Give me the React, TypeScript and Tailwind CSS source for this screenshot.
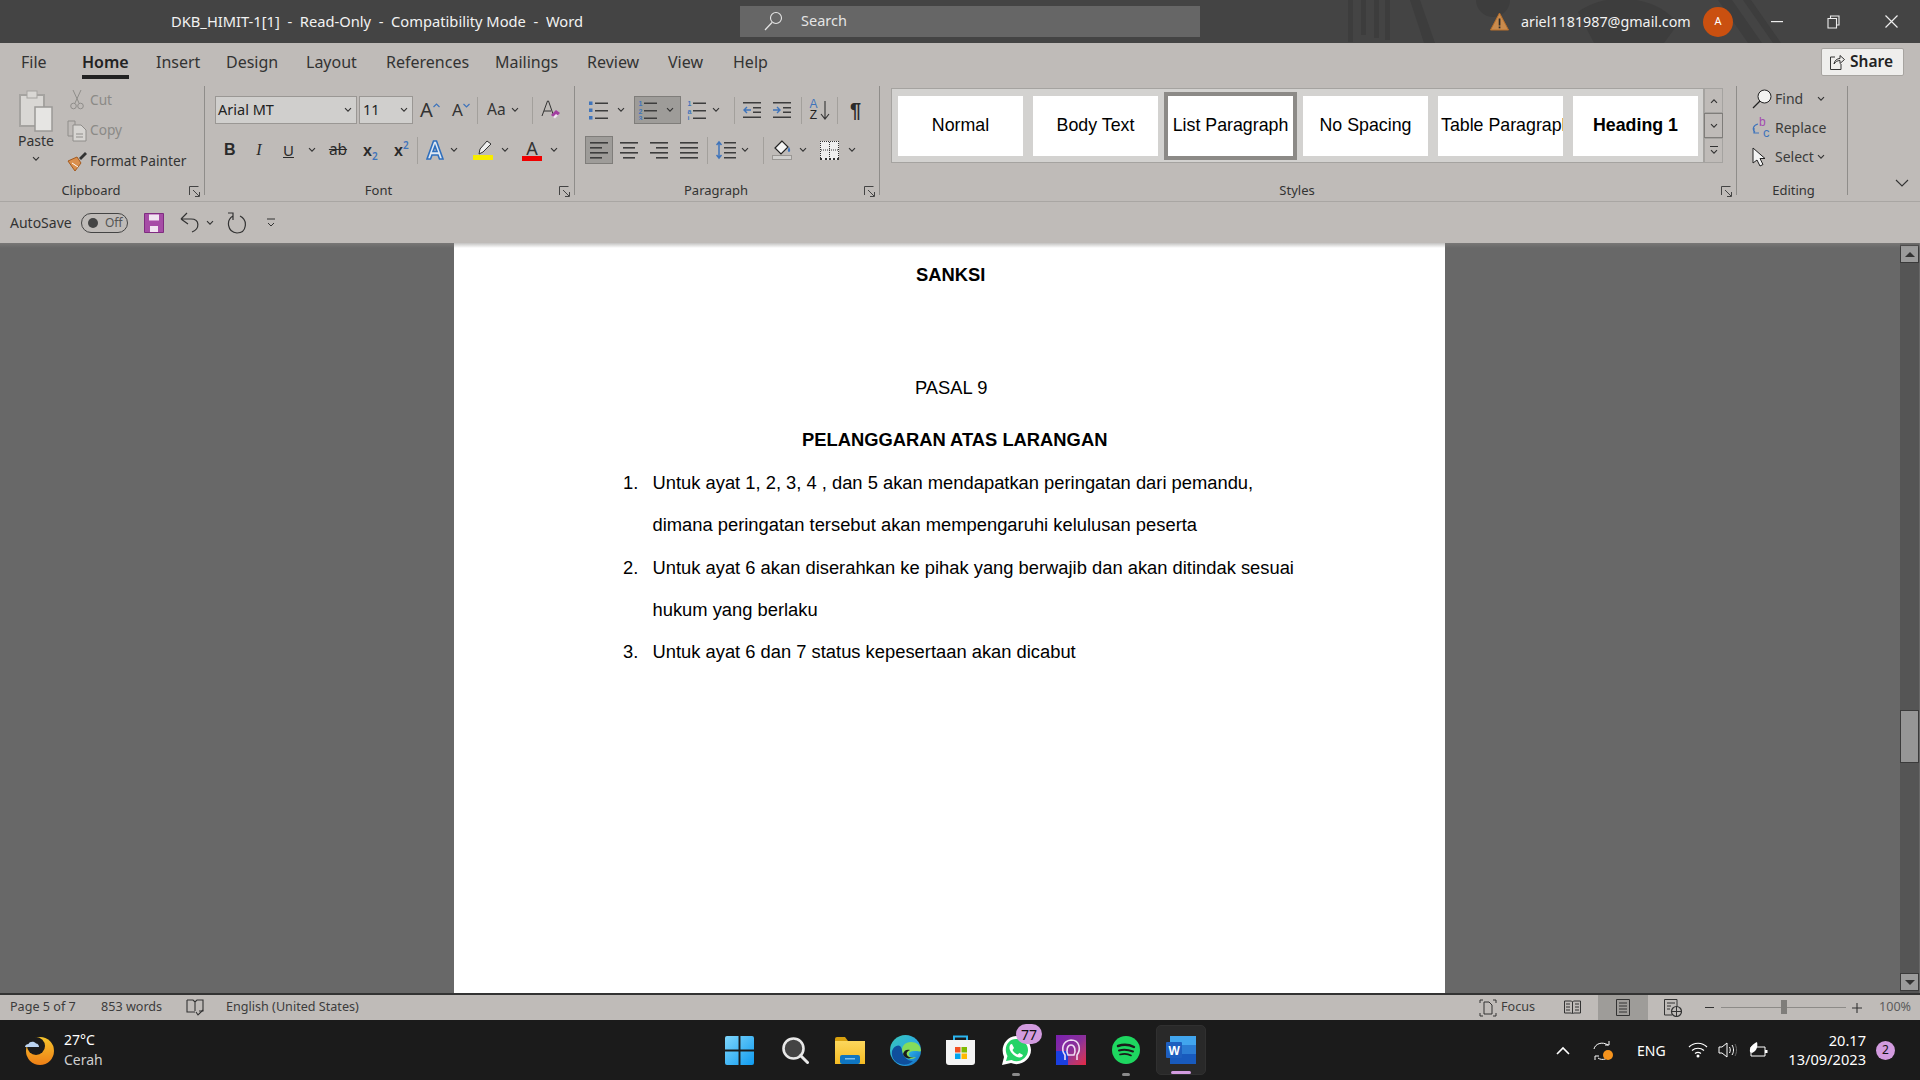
import type { ReactNode } from "react";

const UI = "font-['Noto_Sans','Open_Sans',sans-serif]";
const ARIAL = "font-['Liberation_Sans',Arial,sans-serif]";

const Chevron = ({ className = "" }: { className?: string }) => (
  <svg width="8" height="6" viewBox="0 0 8 6" className={`shrink-0 ${className}`}>
    <path d="M1 1.2 4 4.2 7 1.2" fill="none" stroke="#333" strokeWidth="1.1" />
  </svg>
);

const Launcher = () => (
  <svg width="11" height="11" viewBox="0 0 11 11" className="shrink-0">
    <path d="M.5 9V.5H9.5M4 4l6 6M6 10.5h4.500V6" fill="none" stroke="#444" strokeWidth="1" />
  </svg>
);

const Sep = ({ className = "" }: { className?: string }) => (
  <div className={`w-px h-[27px] shrink-0 bg-[#a3a09c] ${className}`} />
);

const GroupDivider = () => <div className="w-px h-[109px] mt-[6px] shrink-0 bg-[#8f8d8a]" />;

function GroupLabel({ label, launcher = true }: { label: string; launcher?: boolean }) {
  return (
    <div className={`flex items-center h-[20px] ${launcher ? "pr-[4px]" : "pl-[3px]"}`}>
      <span className={`flex-1 text-center text-[13px] text-[#333] ${launcher ? "pr-[7px]" : ""}`}>{label}</span>
      {launcher && <Launcher />}
    </div>
  );
}

function Lines({ align = "left" }: { align?: "left" | "center" | "right" | "just" }) {
  const rows: Record<string, [number, number][]> = {
    left: [[0, 18], [0, 12], [0, 18], [0, 12]],
    center: [[0, 18], [3, 12], [0, 18], [3, 12]],
    right: [[0, 18], [6, 12], [0, 18], [6, 12]],
    just: [[0, 18], [0, 18], [0, 18], [0, 18]],
  };
  return (
    <svg width="18" height="18" viewBox="0 0 18 18" className="shrink-0">
      {rows[align].map(([x, w], i) => (
        <rect key={i} x={x} y={1 + i * 5} width={w} height="1.6" fill="#3d3d3d" />
      ))}
    </svg>
  );
}

function ListIcon({ marks }: { marks?: [string, string, string] }) {
  return (
    <svg width="19" height="20" viewBox="0 0 19 20" className="shrink-0">
      {marks ? (
        marks.map((m, i) => (
          <text key={i} x="0.5" y={6 + i * 7.5} fontSize="7" fontWeight="700" fill="#3f74bb" fontFamily="Liberation Sans">{m}</text>
        ))
      ) : (
        <g fill="#3f74bb">
          <rect x="0" y="1.500" width="3.500" height="3.500" />
          <rect x="0" y="8.500" width="3.500" height="3.500" />
          <rect x="0" y="16" width="3.500" height="3.500" />
        </g>
      )}
      <g fill="#3d3d3d">
        <rect x="6" y="2.500" width="13" height="1.500" />
        <rect x="6" y="10" width="13" height="1.500" />
        <rect x="6" y="17.500" width="13" height="1.500" />
      </g>
    </svg>
  );
}

function IndentIcon({ dir }: { dir: "in" | "out" }) {
  return (
    <svg width="18" height="18" viewBox="0 0 18 18" className="shrink-0">
      <g fill="#3d3d3d">
        <rect x="0" y="1" width="18" height="1.500" />
        <rect x="10" y="6" width="8" height="1.500" />
        <rect x="10" y="10.500" width="8" height="1.500" />
        <rect x="0" y="15.500" width="18" height="1.500" />
      </g>
      <path d={dir === "out" ? "M8 9H1M4 6 1 9l3 3" : "M0 9h7M4 6l3 3-3 3"} fill="none" stroke="#3f74bb" strokeWidth="1.400" />
    </svg>
  );
}

function Tab({ label, width, active }: { label: string; width: string; active?: boolean }) {
  return (
    <div className={`${width} shrink-0`}>
      <div className={`relative inline-flex h-[37px] items-center text-[16px] ${active ? "font-semibold text-[#222]" : "text-[#333]"}`}>
        {label}
        {active && <div className="absolute left-0 right-0 bottom-[1px] h-[4px] bg-[#222]" />}
      </div>
    </div>
  );
}

function StyleCard({ label, selected, bold, clip }: { label: string; selected?: boolean; bold?: boolean; clip?: boolean }) {
  return (
    <div className={`w-[125px] h-[60px] shrink-0 bg-white flex items-center overflow-hidden text-[17.8px] text-black ${ARIAL} ${clip ? "justify-start pl-[3px]" : "justify-center"} ${bold ? "font-bold" : ""} ${selected ? "outline-[4px] outline-[#8c8a87]" : ""}`}>
      <span className="whitespace-nowrap">{label}</span>
    </div>
  );
}

function TitleBar() {
  return (
    <div className={`relative h-[43px] bg-[#444444] flex items-center text-white ${UI}`}>
      <div className="w-[171px] shrink-0" />
      <div className="w-[569px] shrink-0 text-[14.7px] whitespace-pre text-[#f2f2f2]">DKB_HIMIT-1[1]  -  Read-Only  -  Compatibility Mode  -  Word</div>
      <div className="w-[460px] shrink-0 h-[31px] mt-[-1px] bg-[#666666] flex items-center pl-[24px] text-[14.5px] text-[#e4e4e4]">
        <svg width="19" height="20" viewBox="0 0 19 20" className="mr-[18px]">
          <circle cx="12" cy="7" r="5.500" fill="none" stroke="#e6e6e6" strokeWidth="1.100" />
          <path d="M8 11.500 1 19" stroke="#e6e6e6" strokeWidth="1.200" />
        </svg>
        Search
      </div>
      {/* faint pattern behind the account name */}
      <svg width="560" height="43" viewBox="0 0 560 43" className="ml-[148px] shrink-0">
        <g fill="#3d3d3d">
          <rect x="0" y="0" width="5" height="42" />
          <rect x="13" y="0" width="5" height="35" />
          <rect x="26" y="0" width="5" height="38" />
          <rect x="37" y="0" width="5" height="40" />
          <path d="M62 0h10l15 43H76z" />
          <path d="M128 0h34a17 17 0 0 1-34 0Z" />
          <path d="M230 12c30-22 80-16 100 12l-14 19H246Z" />
          <path d="M370 0h14l30 43h-14Z" />
          <path d="M395 0h8l30 43h-8Z" />
        </g>
      </svg>
      <div className="absolute right-[22px] top-0 h-[43px] flex items-center">
        <svg width="19" height="19" viewBox="0 0 19 19" className="shrink-0">
          <path d="M9.500 1 18.500 18H.5Z" fill="#c98b4d" stroke="#b86f2a" />
          <rect x="8.700" y="6.500" width="1.700" height="7" fill="#2b2b2b" />
          <rect x="8.700" y="14.500" width="1.700" height="1.800" fill="#2b2b2b" />
        </svg>
        <span className="ml-[12px] w-[170px] shrink-0 whitespace-nowrap text-[14.3px] text-[#f2f2f2]">ariel1181987@gmail.com</span>
        <div className="w-[30px] h-[30px] ml-[12px] rounded-full bg-[#ca5010] flex items-center justify-center text-[11px]">A</div>
        <svg width="12" height="2" viewBox="0 0 12 2" className="ml-[38px]"><rect width="12" height="1.200" fill="#eee" /></svg>
        <svg width="13" height="14" viewBox="0 0 13 14" className="ml-[44px]">
          <path d="M3.500 3V1H12V10H10M1 3.500H9.500V13H1Z" fill="none" stroke="#eee" strokeWidth="1.100" />
        </svg>
        <svg width="13" height="13" viewBox="0 0 13 13" className="ml-[45px]">
          <path d="M.5.5 12.500 12.500M12.500.5 .5 12.500" stroke="#eee" strokeWidth="1.200" />
        </svg>
      </div>
    </div>
  );
}

function TabRow() {
  return (
    <div className={`relative h-[37px] flex items-center pl-[21px] ${UI}`}>
      <Tab label="File" width="w-[61px]" />
      <Tab label="Home" width="w-[74px]" active />
      <Tab label="Insert" width="w-[70px]" />
      <Tab label="Design" width="w-[80px]" />
      <Tab label="Layout" width="w-[80px]" />
      <Tab label="References" width="w-[109px]" />
      <Tab label="Mailings" width="w-[92px]" />
      <Tab label="Review" width="w-[81px]" />
      <Tab label="View" width="w-[65px]" />
      <Tab label="Help" width="w-[50px]" />
      <div className="absolute right-[16px] top-[5px] w-[83px] h-[28px] bg-[#efeeec] border border-[#a7a4a0] rounded-[2px] flex items-center pl-[8px] gap-[5px] text-[15.5px] font-semibold text-[#222]">
        <svg width="15" height="17" viewBox="0 0 15 17" className="mt-[-2px]">
          <path d="M5 4H.5v12.500H11V11M4 11c.5-3.500 3-5.500 6-5.500V2.500L14.500 6.500 10 10.500V7.500c-2.500 0-4.500 1.200-6 3.500Z" fill="none" stroke="#333" strokeWidth="1" />
        </svg>
        Share
      </div>
    </div>
  );
}

function ClipboardGroup() {
  return (
    <div className="w-[204px] shrink-0 flex flex-col">
      <div className="h-[101px] flex pt-[5px] pl-[16px]">
        <div className="w-[40px] pt-[5px] flex flex-col items-center">
          <svg width="34" height="42" viewBox="0 0 34 42">
            <rect x="1" y="5" width="24" height="31" fill="#d9d7d4" stroke="#a5a3a0" strokeWidth="2" />
            <rect x="8" y="1" width="10" height="7" fill="#d9d7d4" stroke="#a5a3a0" />
            <rect x="16" y="17" width="17" height="24" fill="#e6e5e3" stroke="#9b9996" strokeWidth="1.500" />
          </svg>
          <span className="text-[14px] text-[#333] leading-[18px] mt-[0px]">Paste</span>
          <Chevron className="mt-[6px]" />
        </div>
        <div className="ml-[11px] flex flex-col text-[13.7px]">
          <div className="flex items-center h-[30px] text-[#8b8a87]">
            <svg width="20" height="20" viewBox="0 0 20 20" className="mr-[3px]">
              <path d="M6 0 12 13M14 0 8 13" stroke="#8f8d8a" />
              <circle cx="6.500" cy="16" r="2.800" fill="none" stroke="#8f8d8a" />
              <circle cx="13.500" cy="16" r="2.800" fill="none" stroke="#8f8d8a" />
            </svg>
            Cut
          </div>
          <div className="flex items-center h-[31px] text-[#8b8a87]">
            <svg width="20" height="22" viewBox="0 0 20 22" className="mr-[3px]">
              <path d="M1 1H8V16H1Z" fill="none" stroke="#8f8d8a" />
              <path d="M6 5H14L19 10V21H6Z" fill="#d7d5d2" stroke="#8f8d8a" />
              <path d="M9 14h7M9 17h7" stroke="#8f8d8a" />
            </svg>
            Copy
          </div>
          <div className="flex items-center h-[30px] text-[#333] whitespace-nowrap">
            <svg width="20" height="21" viewBox="0 0 20 21" className="mr-[3px]">
              <path d="M1 10 10 6l4 6-6 8Z" fill="#d98f4e" stroke="#a35a1f" />
              <path d="M5 12l6 4" stroke="#fff" />
              <path d="M12 7l6-6 2 2-6 6Z" fill="#333" />
            </svg>
            Format Painter
          </div>
        </div>
      </div>
      <GroupLabel label="Clipboard" />
    </div>
  );
}

function FontGroup() {
  return (
    <div className="w-[369px] shrink-0 flex flex-col">
      <div className="h-[101px] pl-[10px] flex flex-col">
        <div className="flex items-center mt-[16px] h-[28px]">
          <div className="w-[142px] shrink-0 h-[28px] bg-[#d0cfcd] border border-[#9a9794] flex items-center justify-between pl-[2px] pr-[4px] text-[14.5px] text-[#222]">
            Arial MT<Chevron />
          </div>
          <div className="w-[54px] shrink-0 h-[28px] ml-[2px] bg-[#d0cfcd] border border-[#9a9794] flex items-center justify-between pl-[3px] pr-[4px] text-[14.5px] text-[#222]">
            11<Chevron />
          </div>
          <div className="ml-[7px] w-[20px] shrink-0 flex items-start text-[20px] leading-[24px] text-[#333]">
            A
            <svg width="7" height="5" viewBox="0 0 7 5" className="mt-[5px]"><path d="M.5 4 3.500 1l3 3" fill="none" stroke="#3f74bb" strokeWidth="1.200" /></svg>
          </div>
          <div className="ml-[12px] w-[20px] shrink-0 flex items-start text-[17px] leading-[24px] text-[#333]">
            A
            <svg width="7" height="5" viewBox="0 0 7 5" className="mt-[5px]"><path d="M.5 1l3 3 3-3" fill="none" stroke="#3f74bb" strokeWidth="1.200" /></svg>
          </div>
          <Sep className="ml-[5px]" />
          <span className="ml-[9px] w-[22px] shrink-0 text-[15.5px] text-[#333]">Aa</span>
          <Chevron className="ml-[2px]" />
          <Sep className="ml-[13px]" />
          <svg width="20" height="22" viewBox="0 0 20 22" className="ml-[8px]">
            <path d="M1 17 6.500 2h1L12 15M3 12h7" fill="none" stroke="#333" />
            <path d="M10 16l5-5 4 3-5 5Z" fill="#a23fa0" />
            <path d="M12 18l3-3 2 1.500-3 3Z" fill="#f0e6f0" />
          </svg>
        </div>
        <div className="flex items-center mt-[12px] h-[28px] text-[#2a2a2a]">
          <span className={`ml-[9px] w-[10px] text-center text-[16px] font-bold ${ARIAL}`}>B</span>
          <span className="ml-[21px] w-[8px] text-center text-[16px] italic font-['Liberation_Serif',serif]">I</span>
          <span className="ml-[20px] w-[10px] text-center text-[15px] underline">U</span>
          <Chevron className="ml-[15px]" />
          <span className="ml-[12px] w-[20px] text-center text-[15.5px] line-through">ab</span>
          <span className="ml-[15px] w-[14px] flex items-baseline text-[16px] font-semibold">x<span className="text-[#3f74bb] text-[10px] translate-y-[4px]">2</span></span>
          <span className="ml-[17px] w-[13px] flex items-baseline text-[16px] font-semibold">x<span className="text-[#3f74bb] text-[10px] translate-y-[-7px]">2</span></span>
          <Sep className="ml-[10px]" />
          <svg width="18" height="20" viewBox="0 0 18 20" className="ml-[8px]">
            <path d="M1 19 7.500 1h3L17 19h-3.500l-1.500-4H6l-1.500 4ZM7 11.500h4L9 6Z" fill="#dfe8f3" stroke="#2f6fbd" strokeWidth="1.600" />
          </svg>
          <Chevron className="ml-[6px]" />
          <div className="ml-[15px] w-[20px] shrink-0 flex flex-col items-center">
            <svg width="18" height="15" viewBox="0 0 18 15"><path d="M5 14 6 9l7-8 4 3-8 8Z" fill="#eee" stroke="#333" /></svg>
            <div className="w-[20px] h-[5px] bg-[#f7ec00]" />
          </div>
          <Chevron className="ml-[8px]" />
          <div className="ml-[13px] w-[20px] shrink-0 flex flex-col items-center">
            <span className="text-[18px] leading-[16px] text-[#333]">A</span>
            <div className="w-[20px] h-[5px] bg-[#f00000]" />
          </div>
          <Chevron className="ml-[8px]" />
        </div>
      </div>
      <GroupLabel label="Font" />
    </div>
  );
}

function ParaGroup() {
  return (
    <div className="w-[304px] shrink-0 flex flex-col">
      <div className="h-[101px] flex flex-col">
        <div className="flex items-center mt-[16px] h-[28px]">
          <div className="ml-[14px]"><ListIcon /></div>
          <Chevron className="ml-[9px]" />
          <div className="ml-[9px] w-[47px] shrink-0 h-[28px] bg-[#9e9c99] border border-[#7f7d7a] flex items-center pl-[3px] gap-[9px]">
            <ListIcon marks={["1", "2", "3"]} /><Chevron />
          </div>
          <div className="ml-[6px]"><ListIcon marks={["1", "a", "i"]} /></div>
          <Chevron className="ml-[6px]" />
          <Sep className="ml-[14px]" />
          <div className="ml-[8px]"><IndentIcon dir="out" /></div>
          <div className="ml-[12px]"><IndentIcon dir="in" /></div>
          <Sep className="ml-[10px]" />
          <div className={`ml-[7px] w-[9px] flex flex-col items-center text-[12px] leading-[11px] ${ARIAL}`}>
            <span className="text-[#3f74bb]">A</span><span className="text-[#222]">Z</span>
          </div>
          <svg width="10" height="20" viewBox="0 0 10 20" className="ml-[2px]"><path d="M5 1v18M1 14l4 5 4-5" fill="none" stroke="#333" strokeWidth="1.100" /></svg>
          <Sep className="ml-[7px]" />
          <span className={`ml-[12px] w-[12px] text-[20px] font-bold leading-[24px] text-[#2a2a2a] ${ARIAL}`}>¶</span>
        </div>
        <div className="flex items-center mt-[12px] h-[28px]">
          <div className="ml-[10px] w-[28px] shrink-0 h-[28px] bg-[#9e9c99] border border-[#7f7d7a] flex items-center justify-center"><Lines /></div>
          <div className="ml-[7px]"><Lines align="center" /></div>
          <div className="ml-[12px]"><Lines align="right" /></div>
          <div className="ml-[12px]"><Lines align="just" /></div>
          <Sep className="ml-[9px]" />
          <svg width="20" height="20" viewBox="0 0 20 20" className="ml-[8px]">
            <path d="M3 2v16M.5 5 3 2l2.500 3M.5 15 3 18l2.500-3" fill="none" stroke="#3f74bb" strokeWidth="1.500" />
            <g fill="#3d3d3d">
              <rect x="8" y="2" width="12" height="1.500" />
              <rect x="8" y="7" width="12" height="1.500" />
              <rect x="8" y="12" width="12" height="1.500" />
              <rect x="8" y="17" width="12" height="1.500" />
            </g>
          </svg>
          <Chevron className="ml-[5px]" />
          <Sep className="ml-[14px]" />
          <div className="ml-[8px] w-[20px] shrink-0 flex flex-col items-center">
            <svg width="20" height="15" viewBox="0 0 20 15">
              <path d="M10 1 3 8l6 6 7-7Z" fill="#f4f4f4" stroke="#222" strokeWidth="1.200" />
              <path d="M17 7c1.500 2 1.500 5 0 5s-1.500-3 0-5Z" fill="#3f74bb" />
            </svg>
            <div className="w-[20px] h-[5px] bg-[#d0cfcd] border border-[#9a9794]" />
          </div>
          <Chevron className="ml-[7px]" />
          <div className="ml-[13px] w-[19px] shrink-0 h-[19px] bg-[#efefef] border border-dotted border-[#333] border-b-2 border-b-[#333] flex items-center justify-center">
            <svg width="17" height="16" viewBox="0 0 17 16"><path d="M8.500 0v16M0 8h17" stroke="#333" strokeDasharray="1 1" /></svg>
          </div>
          <Chevron className="ml-[9px]" />
        </div>
      </div>
      <GroupLabel label="Paragraph" />
    </div>
  );
}

function StylesGroup() {
  return (
    <div className="w-[856px] shrink-0 flex flex-col">
      <div className="h-[101px] pl-[11px] pt-[8px] flex">
        <div className="w-[813px] shrink-0 h-[75px] bg-[#d3d2d0] border border-[#a5a3a0] flex items-center pl-[6px] gap-[10px] overflow-hidden">
          <StyleCard label="Normal" />
          <StyleCard label="Body Text" />
          <StyleCard label="List Paragraph" selected />
          <StyleCard label="No Spacing" />
          <StyleCard label="Table Paragraph" clip />
          <StyleCard label="Heading 1" bold />
        </div>
        <div className="w-[19px] shrink-0 h-[75px] flex flex-col">
          <div className="h-[25px] border border-[#a5a3a0] flex items-center justify-center"><Chevron className="rotate-180" /></div>
          <div className="h-[25px] border border-[#7f7d7a] flex items-center justify-center"><Chevron /></div>
          <div className="h-[25px] border border-[#a5a3a0] flex flex-col items-center justify-center">
            <div className="w-[8px] h-px bg-[#333] mb-[2px]" /><Chevron />
          </div>
        </div>
      </div>
      <GroupLabel label="Styles" />
    </div>
  );
}

function EditingGroup() {
  return (
    <div className="w-[110px] shrink-0 flex flex-col">
      <div className="h-[101px] pl-[15px] pt-[4px] text-[14px] text-[#3b3b3b]">
        <div className="h-[29px] flex items-center">
          <svg width="20" height="20" viewBox="0 0 20 20" className="mr-[3px]">
            <circle cx="12.500" cy="7.500" r="6.500" fill="#f2f2f0" stroke="#222" />
            <path d="M8 12 1 19" stroke="#222" strokeWidth="1.300" />
          </svg>
          Find<Chevron className="ml-[14px]" />
        </div>
        <div className="h-[29px] flex items-center">
          <svg width="19" height="21" viewBox="0 0 19 21" className="mr-[4px]">
            <text x="7" y="9" fontSize="12" fill="#a24bb0" fontFamily="Liberation Sans">b</text>
            <text x="11" y="20" fontSize="13" fill="#3f74bb" fontFamily="Liberation Sans">c</text>
            <path d="M6 7C1 8 0 13 3 15M2 11v5h5" fill="none" stroke="#3f74bb" strokeWidth="1.200" />
          </svg>
          Replace
        </div>
        <div className="h-[29px] flex items-center">
          <svg width="14" height="20" viewBox="0 0 14 20" className="mr-[9px]">
            <path d="M1 1v15l4-3 3 6 3-1.500-3-6h5Z" fill="#f4f4f4" stroke="#222" />
          </svg>
          <span>Select</span><Chevron className="ml-[3px]" />
        </div>
      </div>
      <GroupLabel label="Editing" launcher={false} />
    </div>
  );
}

function Ribbon() {
  return (
    <div className={`relative h-[122px] flex border-b border-[#a9a6a3] ${UI}`}>
      <ClipboardGroup />
      <GroupDivider />
      <FontGroup />
      <GroupDivider />
      <ParaGroup />
      <GroupDivider />
      <StylesGroup />
      <GroupDivider />
      <EditingGroup />
      <GroupDivider />
      <svg width="14" height="9" viewBox="0 0 14 9" className="absolute right-[11px] top-[99px]">
        <path d="M1 1l6 6 6-6" fill="none" stroke="#333" strokeWidth="1.100" />
      </svg>
    </div>
  );
}

function QuickAccess() {
  return (
    <div className={`h-[41px] flex items-center pl-[10px] text-[14px] text-[#333] ${UI}`}>
      <span className="w-[62px]">AutoSave</span>
      <div className="ml-[9px] w-[47px] h-[20px] rounded-full border border-[#444] flex items-center pl-[6px] gap-[7px] text-[12px]">
        <div className="w-[10px] h-[10px] rounded-full bg-[#444]" />
        <span className="text-[#555]">Off</span>
      </div>
      <svg width="20" height="20" viewBox="0 0 20 20" className="ml-[16px]">
        <path d="M.5.5h19v19H.5Z" fill="#a64ca6" stroke="#7f2c80" />
        <rect x="5" y="1.500" width="10" height="6" fill="#f1e4f1" />
        <rect x="6" y="13" width="8" height="6" fill="#f1e4f1" />
      </svg>
      <svg width="19" height="21" viewBox="0 0 19 21" className="ml-[16px]">
        <path d="M1 7 7 1M1 7l7 5M1 7h10c9 0 9 10 1 13" fill="none" stroke="#333" strokeWidth="1.200" />
      </svg>
      <Chevron className="ml-[7px]" />
      <svg width="20" height="22" viewBox="0 0 20 22" className="ml-[13px]">
        <path d="M6 4C-1 8 0 20 10 21c10 0 11-13 3-17M1 1h5v7" fill="none" stroke="#333" strokeWidth="1.200" />
      </svg>
      <svg width="8" height="10" viewBox="0 0 8 10" className="ml-[20px]">
        <path d="M0 1h8M1 5l3 3 3-3" fill="none" stroke="#333" />
      </svg>
    </div>
  );
}

function Numbered({ n, children }: { n: number; children: ReactNode }) {
  return (
    <div className="flex h-[42.3px] items-center">
      <span className="w-[29.5px] shrink-0">{n}.</span>
      <span className="whitespace-nowrap">{children}</span>
    </div>
  );
}

function Scrollbar() {
  return (
    <div className="relative w-[19px] h-full bg-[#555555] flex flex-col">
      <div className="w-[19px] h-[18px] mt-[2px] bg-[#9b9b9b] border border-[#3a3a3a] flex items-center justify-center">
        <div className="w-0 h-0 border-x-[5px] border-x-transparent border-b-[5px] border-b-[#333]" />
      </div>
      <div className="absolute top-[467px] left-0 w-[19px] h-[53px] bg-[#969696] border border-[#3a3a3a]" />
      <div className="mt-auto mb-[2px] w-[19px] h-[18px] bg-[#9b9b9b] border border-[#3a3a3a] flex items-center justify-center">
        <div className="w-0 h-0 border-x-[5px] border-x-transparent border-t-[5px] border-t-[#333]" />
      </div>
    </div>
  );
}

function Document() {
  return (
    <div className="relative flex-1 bg-[#686868] flex min-h-0">
      <div className="absolute left-0 right-0 top-0 h-[5px] bg-gradient-to-b from-[#88868480] to-transparent z-10" />
      <div className="w-[454px] shrink-0" />
      <div className={`w-[991px] shrink-0 bg-white text-black text-[18.35px] ${ARIAL}`}>
        <div className="pt-[21px] pl-[462px] font-bold leading-[22px]">SANKSI</div>
        <div className="mt-[91px] pl-[461px] leading-[22px]">PASAL 9</div>
        <div className="mt-[30px] pl-[348px] font-bold leading-[22px]">PELANGGARAN ATAS LARANGAN</div>
        <div className="mt-[11px] pl-[169px] leading-[22px]">
          <Numbered n={1}>Untuk ayat 1, 2, 3, 4 , dan 5 akan mendapatkan peringatan dari pemandu,</Numbered>
          <div className="h-[42.3px] flex items-center pl-[29.5px] whitespace-nowrap">dimana peringatan tersebut akan mempengaruhi kelulusan peserta</div>
          <Numbered n={2}>Untuk ayat 6 akan diserahkan ke pihak yang berwajib dan akan ditindak sesuai</Numbered>
          <div className="h-[42.3px] flex items-center pl-[29.5px] whitespace-nowrap">hukum yang berlaku</div>
          <Numbered n={3}>Untuk ayat 6 dan 7 status kepesertaan akan dicabut</Numbered>
        </div>
      </div>
      <div className="flex-1" />
      <Scrollbar />
      <div className="w-px shrink-0" />
    </div>
  );
}

function StatusBar() {
  return (
    <div className={`h-[27px] border-t-2 border-[#333] bg-[#bfbbb8] flex items-center pl-[10px] text-[12.6px] text-[#3c3c3c] ${UI}`}>
      <span className="w-[91px]">Page 5 of 7</span>
      <span className="w-[85px]">853 words</span>
      <svg width="18" height="17" viewBox="0 0 18 17">
        <path d="M1 1h6l2 2 2-2h6v11h-4M9 3v9M1 1v12h8" fill="none" stroke="#333" strokeWidth="1.100" />
        <path d="M10 13l2 3 5-5" fill="none" stroke="#333" strokeWidth="1.100" />
      </svg>
      <span className="ml-[22px]">English (United States)</span>
      <div className="ml-auto flex items-center h-full">
        <svg width="18" height="18" viewBox="0 0 18 18">
          <path d="M1 4V1h3M14 1h3v3M1 14v3h3M14 17h3v-3" fill="none" stroke="#333" />
          <path d="M5 3h5l3 3v9H5Z" fill="none" stroke="#333" />
        </svg>
        <span className="ml-[4px] w-[32px] mr-[31px] whitespace-nowrap">Focus</span>
        <svg width="17" height="15" viewBox="0 0 17 15">
          <path d="M.5 1h7l1 1 1-1h7v12h-7l-1 1-1-1h-7ZM8.500 2v11M2 4h4M2 7h4M2 10h4M11 4h4M11 7h4M11 10h4" fill="none" stroke="#333" />
        </svg>
        <div className="ml-[17px] w-[50px] h-full bg-[#9e9c99] flex items-center justify-center">
          <svg width="14" height="17" viewBox="0 0 14 17"><path d="M.5.5h13v16H.5ZM3 4h8M3 7h8M3 10h8M3 13h8" fill="none" stroke="#333" /></svg>
        </div>
        <svg width="18" height="18" viewBox="0 0 18 18" className="ml-[16px]">
          <path d="M.5.5H13V8M8 16H.5V.5M3 4h8M3 7h4M3 10h3" fill="none" stroke="#333" />
          <circle cx="12.500" cy="12.500" r="5" fill="#bfbbb8" stroke="#333" strokeWidth="1.200" />
          <path d="M7.500 12.500h10M12.500 7.500v10" stroke="#333" />
        </svg>
        <div className="ml-[23px] w-[9px] h-[1.5px] bg-[#333]" />
        <div className="relative ml-[7px] w-[125px] h-px bg-[#8d8b88]">
          <div className="absolute left-[60px] top-[-7px] w-[6px] h-[14px] bg-[#7f7d7a]" />
        </div>
        <svg width="10" height="10" viewBox="0 0 10 10" className="ml-[6px]"><path d="M5 0v10M0 5h10" stroke="#333" strokeWidth="1.100" /></svg>
        <span className="ml-[17px] mr-[11px] w-[30px] text-right text-[#5c5c5c]">100%</span>
      </div>
    </div>
  );
}

function AppSlot({ children, dot }: { children: ReactNode; dot?: boolean }) {
  return (
    <div className="relative w-[55.2px] h-[50px] shrink-0 flex items-center justify-center">
      {children}
      {dot && <div className="absolute bottom-[-1px] left-1/2 -translate-x-1/2 h-[3px] w-[8px] rounded-full bg-[#8b8b8b]" />}
    </div>
  );
}

function Taskbar() {
  return (
    <div className={`relative h-[60px] bg-[#1b1b1b] flex items-center text-white ${UI}`}>
      <svg width="29" height="29" viewBox="0 0 29 29" className="ml-[25px]">
        <defs>
          <linearGradient id="moon" x1="0" y1="0" x2="0" y2="1">
            <stop offset="0" stopColor="#f5c42c" />
            <stop offset="1" stopColor="#ef7f16" />
          </linearGradient>
          <mask id="moonCut">
            <rect width="29" height="29" fill="#fff" />
            <circle cx="11" cy="10" r="9" fill="#000" />
          </mask>
        </defs>
        <circle cx="15" cy="15" r="14" fill="url(#moon)" mask="url(#moonCut)" />
        <path d="M0 11c0-2 2-3 3.500-3 1-3 6-3 7.500-.5 2 0 3 2 3 3.500Z" fill="#bcd4f2" />
      </svg>
      <div className="ml-[10px] flex flex-col text-[14px] leading-[20px]">
        <span>27°C</span>
        <span className="text-[#cfcfcf]">Cerah</span>
      </div>

      {/* pinned apps */}
      <div className="absolute left-[712px] top-[5px] h-[50px] flex items-center">
        <AppSlot>
          <svg width="29" height="29" viewBox="0 0 30 30">
            <defs>
              <linearGradient id="win" x1="0" y1="0" x2="1" y2="1"><stop offset="0" stopColor="#7fd6fb" /><stop offset="1" stopColor="#0f9bf0" /></linearGradient>
            </defs>
            <path d="M2 0h12v14H0V2a2 2 0 0 1 2-2ZM16 0h12a2 2 0 0 1 2 2v12H16ZM0 16h14v14H2a2 2 0 0 1-2-2ZM16 16h14v12a2 2 0 0 1-2 2H16Z" fill="url(#win)" />
          </svg>
        </AppSlot>
        <AppSlot>
          <svg width="27" height="27" viewBox="0 0 27 27" className="ml-[1px]">
            <circle cx="11.500" cy="11.500" r="10" fill="#444" stroke="#e8e8e8" strokeWidth="2.600" />
            <path d="M18.500 18.500l7 7" stroke="#e8e8e8" strokeWidth="3" strokeLinecap="round" />
          </svg>
        </AppSlot>
        <AppSlot>
          <svg width="30" height="27" viewBox="0 0 30 27" className="ml-[1px]">
            <defs><linearGradient id="fold" x1="0" y1="0" x2="0" y2="1"><stop offset="0" stopColor="#fcd75c" /><stop offset="1" stopColor="#f5bb23" /></linearGradient></defs>
            <path d="M0 2a2 2 0 0 1 2-2h8l3 4H0Z" fill="#d8a00e" />
            <path d="M0 4h30v23H0Z" fill="url(#fold)" />
            <rect x="5" y="18" width="20" height="9" rx="2" fill="#0f76c2" />
            <rect x="10" y="21" width="10" height="1.500" fill="#7cc0ef" />
          </svg>
        </AppSlot>
        <AppSlot>
          <svg width="31" height="31" viewBox="0 0 31 31" className="ml-[1px]">
            <defs>
              <linearGradient id="edge" x1="0" y1="0" x2="1" y2="1"><stop offset="0" stopColor="#39c7b6" /><stop offset=".6" stopColor="#2aa9e6" /><stop offset="1" stopColor="#0e63b8" /></linearGradient>
            </defs>
            <circle cx="15.500" cy="15.500" r="15.500" fill="url(#edge)" />
            <path d="M31 16c0-6-5-9-10-9-6 0-9 4-9 8 0 5 4 9 9 9 2 0 4-1 5-2-4 1-7 0-7-3 0-2 2-3 5-3 3 0 6 1 7 0Z" fill="#84dc5c" />
            <path d="M12 15c0 6 5 11 11 11-3 3-8 5-13 3C4 27 1 22 2 16c2-6 9-8 10-1Z" fill="#0f4f9c" />
            <path d="M13 19c1-4 4-5 7-4-3 1-4 3-3 5 1 2 4 3 6 2-4 3-9 1-10-3Z" fill="#1b1b1b" />
          </svg>
        </AppSlot>
        <AppSlot>
          <svg width="29" height="30" viewBox="0 0 29 30" className="ml-[1px]">
            <path d="M8 5V1.500h13V5" fill="none" stroke="#2bb5ef" strokeWidth="2" />
            <path d="M0 5h29v22a3 3 0 0 1-3 3H3a3 3 0 0 1-3-3Z" fill="#f4f4f4" />
            <rect x="9" y="12" width="5.500" height="5.500" fill="#f25022" />
            <rect x="15.500" y="12" width="5.500" height="5.500" fill="#7fba00" />
            <rect x="9" y="18.500" width="5.500" height="5.500" fill="#00a4ef" />
            <rect x="15.500" y="18.500" width="5.500" height="5.500" fill="#ffb900" />
          </svg>
        </AppSlot>
        <AppSlot dot>
          <svg width="31" height="31" viewBox="0 0 31 31" className="ml-[1px]">
            <path d="M1 30l2-8C-1 13 4 2 15 1c9 0 15 7 15 14 0 10-11 17-20 13Z" fill="#fff" />
            <path d="M5 26l1.500-5C2 13 7 4 15 4c7 0 12 5 12 11 0 8-9 14-16.500 10Z" fill="#25d366" />
            <path d="M11 9l2 4-1.500 2c1 2 3 4 5 4.500l2-1.500 3.500 2c-1 3-4 3-7 1.500s-6-5-6.500-8C8.300 11 9 9 11 9Z" fill="#fff" />
          </svg>
          <div className="absolute left-[28px] top-[-1px] w-[26px] h-[20px] rounded-full bg-[#d29bdf] text-[#111] text-[14px] flex items-center justify-center">77</div>
        </AppSlot>
        <AppSlot>
          <div className="relative w-[30px] h-[30px] ml-[1px] bg-gradient-to-br from-[#7a1fb0] via-[#8a2f9a] to-[#e5243f] flex items-center justify-center overflow-hidden">
            <div className="absolute left-0 bottom-0 w-[12px] h-[14px] bg-[#1a3fe0]" />
            <svg width="22" height="24" viewBox="0 0 22 24" className="relative">
              <path d="M5 22v-5C1 12 2 3 11 2c9 0 10 10 6 15v5M8 17c-2-4-1-10 3-10s5 6 3 10Z" fill="none" stroke="#eedcf2" strokeWidth="1.600" />
            </svg>
          </div>
        </AppSlot>
        <AppSlot dot>
          <svg width="28" height="28" viewBox="0 0 28 28" className="ml-[1px]">
            <circle cx="14" cy="14" r="14" fill="#1ed760" />
            <g fill="none" stroke="#1b1b1b" strokeLinecap="round">
              <path d="M6 10c6-2 11-1.500 16 1" strokeWidth="2.400" />
              <path d="M7 14.500c5-1.500 9-1 14 1" strokeWidth="2" />
              <path d="M8 18.500c4-1 8-.8 11 1" strokeWidth="1.600" />
            </g>
          </svg>
        </AppSlot>
        <div className="relative w-[50px] h-[50px] ml-[2px] shrink-0 rounded-[5px] bg-[#292929] border border-[#303030] flex items-center justify-center">
          <svg width="30" height="28" viewBox="0 0 30 28">
            <rect x="4" y="0" width="26" height="9" fill="#41a5ee" />
            <rect x="4" y="9" width="26" height="9" fill="#2b7cd3" />
            <rect x="4" y="18" width="26" height="10" fill="#185abd" />
            <rect x="0" y="6" width="16" height="16" rx="1" fill="#1e5fbf" />
            <text x="2.500" y="18.500" fontSize="12" fontWeight="700" fill="#fff" fontFamily="Liberation Sans">W</text>
          </svg>
          <div className="absolute bottom-[0px] left-1/2 -translate-x-1/2 h-[3px] w-[20px] rounded-full bg-[#d29bdf]" />
        </div>
      </div>

      {/* system tray */}
      <div className="ml-auto flex items-center pr-[25px]">
        <svg width="14" height="9" viewBox="0 0 14 9"><path d="M1 8l6-6 6 6" fill="none" stroke="#fff" strokeWidth="1.600" /></svg>
        <svg width="20" height="21" viewBox="0 0 20 21" className="ml-[23px]">
          <path d="M1 9c1-5 8-8 14-4M16 1v4h-4M18 14c-2 5-9 7-13 4M2 20v-4h4" fill="none" stroke="#fff" strokeWidth="1" />
          <circle cx="15" cy="15" r="5" fill="#f7941d" />
        </svg>
        <span className="ml-[24px] w-[28px] text-[14px]">ENG</span>
        <svg width="20" height="16" viewBox="0 0 20 16" className="ml-[23px]">
          <path d="M1 5c5-5 13-5 18 0M4 8.500c3.500-3 8.500-3 12 0M7 11.500c2-1.500 4-1.500 6 0" fill="none" stroke="#fff" strokeWidth="1.200" />
          <circle cx="10" cy="14" r="1.500" fill="#fff" />
        </svg>
        <svg width="20" height="16" viewBox="0 0 20 16" className="ml-[10px]">
          <path d="M1 5h3l5-4v14l-5-4H1Z" fill="none" stroke="#fff" />
          <path d="M11.500 5c1 2 1 4 0 6M14 3c2 3 2 7 0 10" fill="none" stroke="#fff" />
          <path d="M17 2c2 4 2 8 0 12" fill="none" stroke="#666" />
        </svg>
        <svg width="20" height="18" viewBox="0 0 20 18" className="ml-[10px]">
          <path d="M3 6h14v9H3Z" fill="none" stroke="#fff" />
          <rect x="17" y="9" width="2.500" height="3" fill="#fff" />
          <path d="M2 11C1 6 5 3 9 1c1 4 0 9-5 11Z" fill="#fff" />
        </svg>
        <div className="ml-[21px] w-[77px] flex flex-col items-end text-[14.6px] leading-[19.5px] whitespace-nowrap">
          <span>20.17</span>
          <span>13/09/2023</span>
        </div>
        <div className="ml-[10px] w-[19px] h-[19px] rounded-full bg-[#d29bdf] text-[#111] text-[12px] flex items-center justify-center">2</div>
      </div>
    </div>
  );
}

export default function App() {
  return (
    <div className="w-[1920px] h-[1080px] flex flex-col overflow-hidden bg-[#bfbbb8]">
      <TitleBar />
      <TabRow />
      <Ribbon />
      <QuickAccess />
      <Document />
      <StatusBar />
      <Taskbar />
    </div>
  );
}
